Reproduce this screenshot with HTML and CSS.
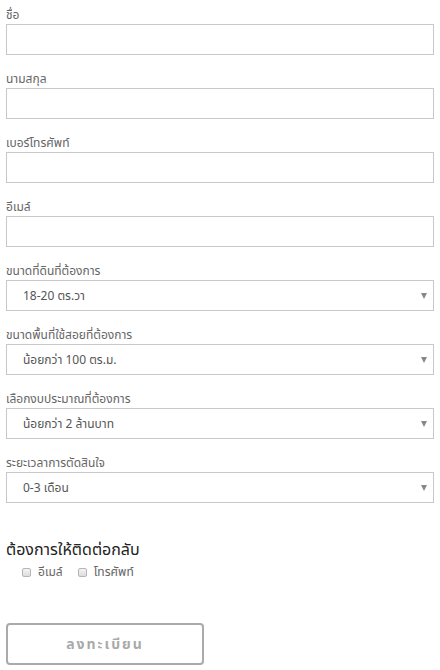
FILE: index.html
```html
<!DOCTYPE html>
<html lang="th">
<head>
    <meta charset="UTF-8">
    <meta name="viewport" content="width=device-width, initial-scale=1.0">
    <title>ลงทะเบียน</title>
    <link rel="stylesheet" href="styles.css">
</head>
<body>
    <form class="register">
        <div class="form-group">
            <label for="firstName">ชื่อ</label>
            <input type="text" id="firstName">
        </div>
        <div class="form-group">
            <label for="lastName">นามสกุล</label>
            <input type="text" id="lastName">
        </div>
        <div class="form-group">
            <label for="phone">เบอร์โทรศัพท์</label>
            <input type="tel" id="phone">
        </div>
        <div class="form-group">
            <label for="email">อีเมล์</label>
            <input type="email" id="email">
        </div>

        <div class="form-group">
            <label for="landSize">ขนาดที่ดินที่ต้องการ</label>
            <div class="select-wrap">
                <select id="landSize">
                    <option>18-20 ตร.วา</option>
                </select>
            </div>
        </div>
        <div class="form-group">
            <label for="usableArea">ขนาดพื้นที่ใช้สอยที่ต้องการ</label>
            <div class="select-wrap">
                <select id="usableArea">
                    <option>น้อยกว่า 100 ตร.ม.</option>
                </select>
            </div>
        </div>
        <div class="form-group">
            <label for="budget">เลือกงบประมาณที่ต้องการ</label>
            <div class="select-wrap">
                <select id="budget">
                    <option>น้อยกว่า 2 ล้านบาท</option>
                </select>
            </div>
        </div>
        <div class="form-group">
            <label for="decision">ระยะเวลาการตัดสินใจ</label>
            <div class="select-wrap">
                <select id="decision">
                    <option>0-3 เดือน</option>
                </select>
            </div>
        </div>

        <div class="contact-back">
            <h3>ต้องการให้ติดต่อกลับ</h3>
            <div class="checks">
                <label class="check"><input type="checkbox"> อีเมล์</label>
                <label class="check"><input type="checkbox"> โทรศัพท์</label>
            </div>
        </div>

        <button type="button" class="submit">ลงทะเบียน</button>
    </form>
</body>
</html>
```

FILE: styles.css
```css
body {
    margin: 0;
    padding: 6px;
    font-family: Tahoma, "Noto Sans", "Noto Sans Thai", sans-serif;
    color: #666;
    background: #fff;
}
.register {
    width: 428px;
}
.form-group {
    margin-bottom: 15px;
}
.form-group label {
    display: block;
    font-size: 12px;
    line-height: 18px;
    color: #666;
}
.form-group input,
.form-group select {
    display: block;
    width: 100%;
    height: 31px;
    margin: 0;
    border: 1px solid #c8c8c8;
    border-radius: 0;
    box-sizing: border-box;
    background: #fff;
    font-family: inherit;
    font-size: 12px;
    color: #555;
    outline: none;
}
.form-group select {
    appearance: none;
    -webkit-appearance: none;
    padding: 0 30px 0 16px;
}
.select-wrap {
    position: relative;
}
.select-wrap::after {
    content: "";
    position: absolute;
    right: 7px;
    top: 13px;
    border-left: 3px solid transparent;
    border-right: 3px solid transparent;
    border-top: 6px solid #888;
}
.contact-back {
    margin-top: 36px;
}
.contact-back h3 {
    margin: 0;
    font-size: 16px;
    font-weight: normal;
    line-height: 20px;
    color: #222;
}
.checks {
    display: flex;
    gap: 15px;
    padding-left: 16px;
    margin-top: 4px;
}
.check {
    display: flex;
    align-items: center;
    gap: 7px;
    font-size: 12px;
    color: #666;
}
.check input {
    appearance: none;
    -webkit-appearance: none;
    width: 9px;
    height: 9px;
    margin: 0;
    border: 1px solid #b5b5b5;
    border-radius: 2px;
    background: linear-gradient(#f4f4f4, #dcdcdc);
}
.submit {
    display: block;
    margin-top: 42px;
    width: 198px;
    height: 42px;
    border: 2px solid #aaa;
    border-radius: 4px;
    background: #fff;
    font-family: inherit;
    font-size: 14px;
    font-weight: bold;
    letter-spacing: 2px;
    color: #aaa;
    cursor: pointer;
}
```
